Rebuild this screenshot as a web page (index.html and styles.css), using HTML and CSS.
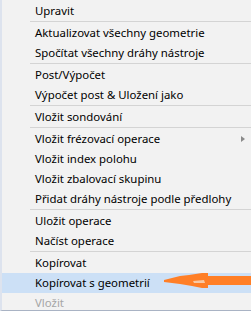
FILE: index.html
```html
<!DOCTYPE html>
<html lang="cs">
<head>
    <meta charset="UTF-8">
    <title>Kontextové menu</title>
    <link rel="stylesheet" href="styles.css">
</head>
<body>

    <div class="menu">
        <div class="item">Upravit</div>
        <div class="sep"></div>
        <div class="item">Aktualizovat všechny geometrie</div>
        <div class="item">Spočítat všechny dráhy nástroje</div>
        <div class="sep"></div>
        <div class="item">Post/Výpočet</div>
        <div class="item">Výpočet post &amp; Uložení jako</div>
        <div class="sep"></div>
        <div class="item">Vložit sondování</div>
        <div class="sep"></div>
        <div class="item sub">Vložit frézovací operace <span class="arrow"></span></div>
        <div class="item">Vložit index polohu</div>
        <div class="item">Vložit zbalovací skupinu</div>
        <div class="item">Přidat dráhy nástroje podle předlohy</div>
        <div class="sep"></div>
        <div class="item">Uložit operace</div>
        <div class="item">Načíst operace</div>
        <div class="sep"></div>
        <div class="item">Kopírovat</div>
        <div class="item active">Kopírovat s geometrií</div>
        <div class="item disabled">Vložit</div>

        <!-- orange marker drawn over the menu -->
        <svg class="marker" width="90" height="18" viewBox="0 0 90 18">
            <path d="M0 8 L8 6 L16 4 L25 3 L38 1 L44 1 L44 4 L90 4 L90 13 L44 13 L44 16 L38 16 L28 14 L16 12 L8 11 L0 10 Z" fill="#ff7f27"/>
            <path d="M29 9 L40 8 L41 11 L30 11 Z" fill="#f8c9a4"/>
        </svg>
    </div>

</body>
</html>
```

FILE: styles.css
```css
* {
    margin: 0;
    padding: 0;
    box-sizing: border-box;
}

body {
    font-family: 'Noto Sans', sans-serif;
    font-size: 11.4px;
    background: #f2f2f2;
    color: #000;
    width: 251px;
    height: 311px;
    overflow: hidden;
}

.menu {
    position: relative;
    width: 251px;
    height: 311px;
    background: #f2f2f2;
    border-left: 2px solid #dde3ee;
    border-bottom: 1px solid #a9b3c4;
    padding-top: 1px;
    overflow: hidden;
}

.item {
    height: 20px;
    line-height: 20px;
    padding-left: 33px;
    white-space: nowrap;
    display: flex;
    align-items: center;
}

.item.active {
    background: #cce0f6;
}

.item.disabled {
    color: #a6a6a6;
}

.sub {
    justify-content: space-between;
    padding-right: 6px;
}

.arrow {
    width: 0;
    height: 0;
    border-top: 3px solid transparent;
    border-bottom: 3px solid transparent;
    border-left: 4px solid #8a8a8a;
}

.sep {
    height: 1px;
    margin: 0 0 1px 28px;
    background: #d4d4d4;
}

.marker {
    position: absolute;
    left: 162px;
    top: 272px;
}
```
